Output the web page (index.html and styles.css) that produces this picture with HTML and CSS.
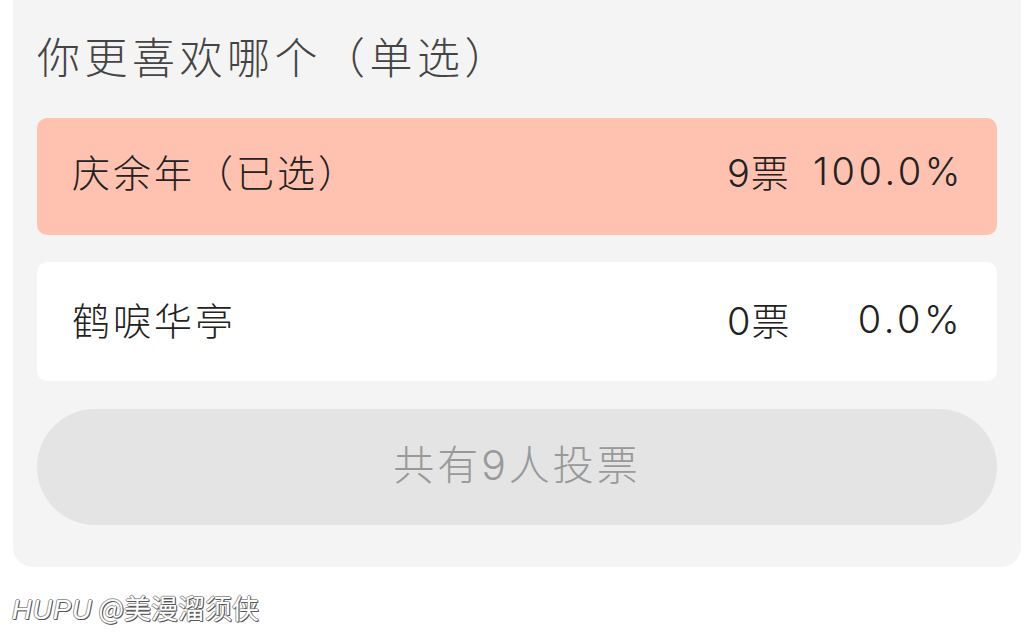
FILE: index.html
```html
<!DOCTYPE html>
<html lang="zh">
<head>
<meta charset="utf-8">
<link rel="stylesheet" href="styles.css">
</head>
<body>
<div class="card">
  <div class="title">你更喜欢哪个（单选）</div>
  <div class="option selected">
    <span class="name">庆余年（已选）</span>
    <span class="votes">9票</span>
    <span class="pct">100.0%</span>
  </div>
  <div class="option">
    <span class="name">鹤唳华亭</span>
    <span class="votes">0票</span>
    <span class="pct">0.0%</span>
  </div>
  <div class="total">共有9人投票</div>
</div>
<div class="mark"><span class="logo">HUPU</span> @美漫溜须侠</div>
</body>
</html>
```
FILE: styles.css
```css
html, body {
  margin: 0;
  padding: 0;
  background: #ffffff;
}
body {
  width: 1034px;
  height: 632px;
  overflow: hidden;
  font-family: Inter, "Noto Sans CJK SC", sans-serif;
  font-weight: 300;
}
.card {
  margin-left: 13px;
  width: 1008px;
  box-sizing: border-box;
  background: #f4f4f4;
  border-radius: 0 0 20px 20px;
  padding: 30px 24px 42px;
  display: flex;
  flex-direction: column;
}
.title {
  font-size: 43px;
  line-height: 56px;
  color: #444444;
  margin-bottom: 32px;
  letter-spacing: 4.5px;
}
.option {
  height: 117px;
  box-sizing: border-box;
  border-radius: 10px;
  background: #ffffff;
  display: flex;
  align-items: center;
  padding: 0 37px 6px 35px;
  font-size: 38px;
  color: #222222;
  margin-bottom: 27px;
}
.option.selected {
  background: #ffc1b0;
  padding-bottom: 12px;
}
.option + .option {
  height: 119px;
  margin-bottom: 28px;
}
.name {
  flex: 1;
  letter-spacing: 3px;
}
.votes {
  width: 86px;
  letter-spacing: 1px;
}
.pct {
  width: 150px;
  text-align: right;
  letter-spacing: 3.5px;
  margin-right: -3px;
}
.total {
  height: 116px;
  border-radius: 58px;
  background: #e4e4e4;
  color: #999999;
  font-size: 41px;
  display: flex;
  align-items: center;
  justify-content: center;
  padding-bottom: 10px;
  box-sizing: border-box;
  letter-spacing: 3px;
}
.mark {
  margin: 25px 0 0 12px;
  font-size: 27px;
  line-height: 32px;
  color: #ffffff;
  text-shadow: 1px 1px 0 #555, -1px 0 0 #999, 0 -1px 0 #999, 1px 0 0 #777, 0 1px 0 #777;
  font-family: "Noto Sans CJK SC", sans-serif;
  font-weight: 400;
}
.logo {
  font-style: italic;
  font-family: "Liberation Sans", sans-serif;
  letter-spacing: 1px;
}
```
